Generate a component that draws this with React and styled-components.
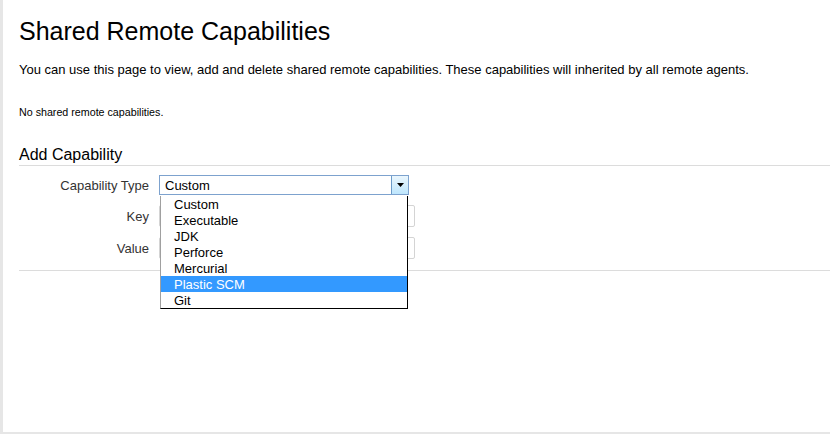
import React from "react";
import styled, { createGlobalStyle } from "styled-components";

const GlobalStyle = createGlobalStyle`
  html, body {
    margin: 0;
    padding: 0;
    background: #e6e6e6;
    font-family: Arial, "Liberation Sans", sans-serif;
    color: #000;
  }
`;

const Page = styled.div`
  box-sizing: border-box;
  margin-left: 3px;
  width: 827px;
  height: 432px;
  background: #fff;
  padding: 16px 0 0 16px;
`;

const Title = styled.h1`
  margin: 0;
  font-size: 25px;
  font-weight: normal;
  line-height: 30px;
`;

const Intro = styled.p`
  margin: 16px 0 0;
  font-size: 13px;
  line-height: 16px;
`;

const Empty = styled.p`
  margin: 28px 0 0;
  font-size: 10.7px;
  line-height: 13px;
`;

const Section = styled.div`
  margin-top: 26px;
  border-bottom: 1px solid #dcdcdc;
  padding-bottom: 11px;
`;

const SectionTitle = styled.h2`
  margin: 0;
  font-size: 16px;
  font-weight: normal;
  line-height: 20px;
  border-bottom: 1px solid #dcdcdc;
`;

const Form = styled.div`
  display: flex;
  flex-direction: column;
  gap: 10px;
  padding-top: 9px;
`;

const Row = styled.div`
  display: flex;
  align-items: center;
`;

const Label = styled.label`
  width: 140px;
  padding-right: 10px;
  box-sizing: border-box;
  text-align: right;
  font-size: 13px;
  color: #333;
`;

const SelectWrap = styled.div`
  position: relative;
`;

const SelectBox = styled.div`
  box-sizing: border-box;
  width: 250px;
  height: 20px;
  border: 1px solid #7da2ce;
  display: flex;
  align-items: center;
  background: #fff;
  font-size: 13px;
  padding-left: 5px;
`;

const SelectValue = styled.span`
  flex: 1;
`;

const Arrow = styled.span`
  box-sizing: border-box;
  width: 17px;
  height: 18px;
  border-left: 1px solid #6c9bc9;
  background: linear-gradient(#eaf6fd, #bee6fd);
  display: flex;
  align-items: center;
  justify-content: center;
`;

const Menu = styled.ul`
  position: absolute;
  left: 1px;
  top: 21px;
  width: 248px;
  box-sizing: border-box;
  margin: 0;
  padding: 0;
  list-style: none;
  background: #fff;
  border: 1px solid #000;
  border-left-color: #a0a0a0;
  border-top: none;
  z-index: 2;
`;

const Option = styled.li`
  height: 16px;
  line-height: 17px;
  font-size: 13px;
  padding-left: 13px;
  background: ${(p) => (p.$active ? "#3399ff" : "transparent")};
  color: ${(p) => (p.$active ? "#fff" : "#000")};
`;

const Input = styled.input`
  box-sizing: border-box;
  width: 256px;
  height: 22px;
  border: 1px solid #d4d4d4;
  border-radius: 2px;
  margin: 0;
`;

const options = [
  "Custom",
  "Executable",
  "JDK",
  "Perforce",
  "Mercurial",
  "Plastic SCM",
  "Git",
];

export default function App() {
  return (
    <>
      <GlobalStyle />
      <Page>
        <Title>Shared Remote Capabilities</Title>
        <Intro>
          You can use this page to view, add and delete shared remote
          capabilities. These capabilities will inherited by all remote agents.
        </Intro>
        <Empty>No shared remote capabilities.</Empty>
        <Section>
          <SectionTitle>Add Capability</SectionTitle>
          <Form>
            <Row>
              <Label>Capability Type</Label>
              <SelectWrap>
                <SelectBox>
                  <SelectValue>Custom</SelectValue>
                  <Arrow>
                    <svg width="7" height="4" viewBox="0 0 7 4">
                      <path d="M0 0h7L3.5 4z" fill="#000" />
                    </svg>
                  </Arrow>
                </SelectBox>
                <Menu>
                  {options.map((o) => (
                    <Option key={o} $active={o === "Plastic SCM"}>
                      {o}
                    </Option>
                  ))}
                </Menu>
              </SelectWrap>
            </Row>
            <Row>
              <Label>Key</Label>
              <Input />
            </Row>
            <Row>
              <Label>Value</Label>
              <Input />
            </Row>
          </Form>
        </Section>
      </Page>
    </>
  );
}
